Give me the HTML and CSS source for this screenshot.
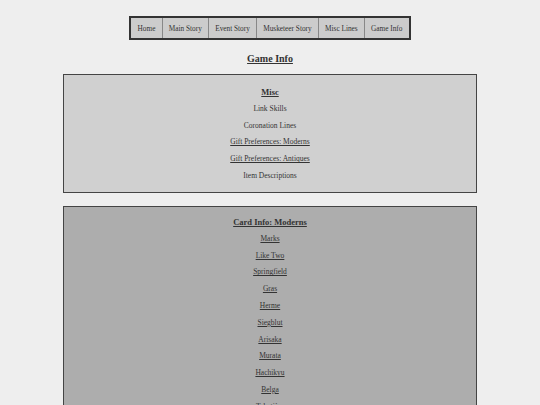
FILE: index.html
```html
<!DOCTYPE html>
<html>
<head>
<meta charset="utf-8">
<link rel="stylesheet" href="styles.css">
</head>
<body>
<nav class="nav">
  <a class="nav-item">Home</a>
  <a class="nav-item">Main Story</a>
  <a class="nav-item">Event Story</a>
  <a class="nav-item">Musketeer Story</a>
  <a class="nav-item">Misc Lines</a>
  <a class="nav-item">Game Info</a>
</nav>
<h1 class="title">Game Info</h1>
<section class="box box-light">
  <h2 class="box-title">Misc</h2>
  <p class="item">Link Skills</p>
  <p class="item">Coronation Lines</p>
  <p class="item"><a class="link">Gift Preferences: Moderns</a></p>
  <p class="item"><a class="link">Gift Preferences: Antiques</a></p>
  <p class="item">Item Descriptions</p>
</section>
<section class="box box-dark">
  <h2 class="box-title">Card Info: Moderns</h2>
  <p class="item"><a class="link">Marks</a></p>
  <p class="item"><a class="link">Like Two</a></p>
  <p class="item"><a class="link">Springfield</a></p>
  <p class="item"><a class="link">Gras</a></p>
  <p class="item"><a class="link">Herme</a></p>
  <p class="item"><a class="link">Siegblut</a></p>
  <p class="item"><a class="link">Arisaka</a></p>
  <p class="item"><a class="link">Murata</a></p>
  <p class="item"><a class="link">Hachikyu</a></p>
  <p class="item"><a class="link">Belga</a></p>
  <p class="item"><a class="link">Tabatière</a></p>
  <p class="item"><a class="link">Kentucky</a></p>
</section>
</body>
</html>
```
FILE: styles.css
```css
html, body {
  margin: 0;
  padding: 0;
}
body {
  background: #eeeeee;
  font-family: "Liberation Serif", "Times New Roman", serif;
  color: #333333;
  padding: 16px 8px 0;
  -webkit-font-smoothing: antialiased;
}
.nav {
  display: flex;
  width: max-content;
  margin: 0 auto;
  border: 2px solid #333333;
  background: #cccccc;
}
.nav-item {
  display: block;
  font-size: 7.3px;
  line-height: 19px;
  padding: 1px 6.2px 0;
  color: #333333;
  border-left: 1px solid #888888;
}
.nav-item:first-child {
  border-left: none;
}
.title {
  font-size: 10px;
  line-height: 12px;
  font-weight: bold;
  text-decoration: underline;
  text-align: center;
  margin: 13px 0 9px;
}
.box {
  width: 414px;
  box-sizing: border-box;
  margin: 0 auto 12.5px;
  border: 1px solid #444444;
  text-align: center;
}
.box-light {
  background: #d0d0d0;
  padding: 4.6px 0 3.6px;
}
.box-dark {
  background: #adadad;
  padding: 2.6px 0 4px;
}
.box-title {
  font-size: 8.5px;
  line-height: 8.75px;
  font-weight: bold;
  text-decoration: underline;
  margin: 8px 0 8.5px;
}
.item {
  font-size: 7.5px;
  line-height: 8.8px;
  margin: 8px 0;
}
.link {
  color: #333333;
  text-decoration: underline;
}
```
